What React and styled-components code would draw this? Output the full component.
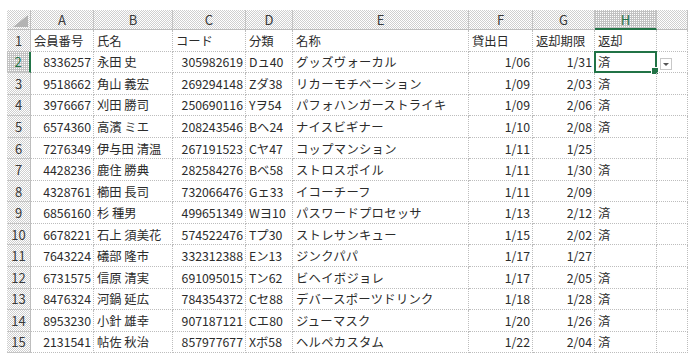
import React from 'react'
import { styled, createGlobalStyle } from 'styled-components'

const GlobalStyle = createGlobalStyle`
*{
  margin: 0;
  padding: 0;
  box-sizing: border-box;
}
body{
  background: #fff;
  font-family: 'Noto Sans CJK JP', 'Noto Sans', sans-serif;
  color: #2b2b2b;
}
`

const GREEN = '#217346'
const checker = 'repeating-conic-gradient(#cfcfcf 0 25%, #fff 0 50%) 0 0 / 2px 2px'
const checkerDark = `conic-gradient(from 90deg at 1px 1px, #c2c2c2 75%, #fff 0) 0 0 / 2px 2px`

const Page = styled.div`
padding: 10px 0 0 7px;
`

const Sheet = styled.div`
display: grid;
grid-template-columns: 24px 63px 79px 73px 47px 176px 64px 62px 62px 31px;
grid-template-rows: 20px repeat(15, 21.55px);
width: max-content;
`

const Corner = styled.div`
position: relative;
background: ${checker};
border-right: 1px solid #bdbdbd;
border-bottom: 1px solid #bdbdbd;
display: flex;
align-items: flex-end;
justify-content: flex-end;
padding: 0 2px 2px 0;
`

const Triangle = styled.span`
width: 15px;
height: 12px;
background: #b3b3b3;
clip-path: polygon(100% 0, 100% 100%, 0 100%);
`

const ColHead = styled.div`
display: flex;
align-items: center;
justify-content: center;
font-size: 13px;
color: ${({ $active }) => ($active ? GREEN : '#3a3a3a')};
background: ${({ $active }) => ($active ? checkerDark : checker)};
border-right: 1px solid #c4c4c4;
border-bottom: ${({ $active }) => ($active ? `2px solid ${GREEN}` : '1px solid #bdbdbd')};
`

const RowHead = styled.div`
display: flex;
align-items: center;
justify-content: center;
font-size: 13px;
color: ${({ $active }) => ($active ? GREEN : '#3a3a3a')};
background: ${({ $active }) => ($active ? checkerDark : checker)};
border-right: ${({ $active }) => ($active ? `2px solid ${GREEN}` : '1px solid #bdbdbd')};
border-bottom: 1px solid #c4c4c4;
`

const Cell = styled.div`
position: relative;
display: flex;
align-items: center;
justify-content: ${({ $num }) => ($num ? 'flex-end' : 'flex-start')};
padding: 1px 2px 0 3px;
font-size: 12.3px;
white-space: nowrap;
border-right: 1px dotted #bdbdbd;
border-bottom: 1px dotted #bdbdbd;
letter-spacing: ${({ $wide }) => ($wide ? '0.3px' : '0')};
`

const Selection = styled.span`
position: absolute;
top: -1px;
left: -1px;
right: -1px;
bottom: -1px;
border: 2px solid ${GREEN};
pointer-events: none;
&::after{
  content: '';
  position: absolute;
  right: -4px;
  bottom: -4px;
  width: 6px;
  height: 6px;
  background: ${GREEN};
  border: 1px solid #fff;
}
`

const DropButton = styled.span`
position: absolute;
left: calc(100% + 4px);
top: 6px;
width: 12px;
height: 12px;
border: 1px solid #c8c8c8;
background: #fff;
display: flex;
align-items: center;
justify-content: center;
&::after{
  content: '';
  border-left: 3px solid transparent;
  border-right: 3px solid transparent;
  border-top: 3px solid #555;
  margin-top: 1px;
}
`

const headers = ['A', 'B', 'C', 'D', 'E', 'F', 'G', 'H', '']

const rows = [
  ['会員番号', '氏名', 'コード', '分類', '名称', '貸出日', '返却期限', '返却'],
  ['8336257', '永田 史', '305982619', 'Dュ40', 'グッズヴォーカル', '1/06', '1/31', '済'],
  ['9518662', '角山 義宏', '269294148', 'Zダ38', 'リカーモチベーション', '1/09', '2/03', '済'],
  ['3976667', '刈田 勝司', '250690116', 'Yヲ54', 'パフォハンガーストライキ', '1/09', '2/06', '済'],
  ['6574360', '高濱 ミエ', '208243546', 'Bヘ24', 'ナイスビギナー', '1/10', '2/08', '済'],
  ['7276349', '伊与田 清温', '267191523', 'Cヤ47', 'コップマンション', '1/11', '1/25', ''],
  ['4428236', '鹿住 勝典', '282584276', 'Bベ58', 'ストロスポイル', '1/11', '1/30', '済'],
  ['4328761', '櫛田 長司', '732066476', 'Gェ33', 'イコーチーフ', '1/11', '2/09', ''],
  ['6856160', '杉 種男', '499651349', 'Wヨ10', 'パスワードプロセッサ', '1/13', '2/12', '済'],
  ['6678221', '石上 須美花', '574522476', 'Tプ30', 'ストレサンキュー', '1/15', '2/02', '済'],
  ['7643224', '礒部 隆市', '332312388', 'Eン13', 'ジンクパパ', '1/17', '1/27', ''],
  ['6731575', '信原 清実', '691095015', 'Tン62', 'ビヘイボジョレ', '1/17', '2/05', '済'],
  ['8476324', '河鍋 延広', '784354372', 'Cセ88', 'デバースポーツドリンク', '1/18', '1/28', '済'],
  ['8953230', '小針 雄幸', '907187121', 'Cエ80', 'ジューマスク', '1/20', '1/26', '済'],
  ['2131541', '帖佐 秋治', '857977677', 'Xボ58', 'ヘルペカスタム', '1/22', '2/04', '済'],
]

// numeric columns: A, C, F, G
const numCols = [0, 2, 5, 6]

const App = () => {
  return (
    <Page>
      <GlobalStyle />
      <Sheet>
        <Corner><Triangle /></Corner>
        {headers.map((h, i) => (
          <ColHead key={'h' + i} $active={h === 'H'}>{h}</ColHead>
        ))}
        {rows.map((row, r) => (
          <React.Fragment key={r}>
            <RowHead $active={r === 1}>{r + 1}</RowHead>
            {[...row, ''].map((v, c) => (
              <Cell key={c} $num={r > 0 && numCols.includes(c)} $wide={c === 4}>
                {v}
                {r === 1 && c === 7 && (
                  <>
                    <Selection />
                    <DropButton />
                  </>
                )}
              </Cell>
            ))}
          </React.Fragment>
        ))}
      </Sheet>
    </Page>
  )
}

export default App
